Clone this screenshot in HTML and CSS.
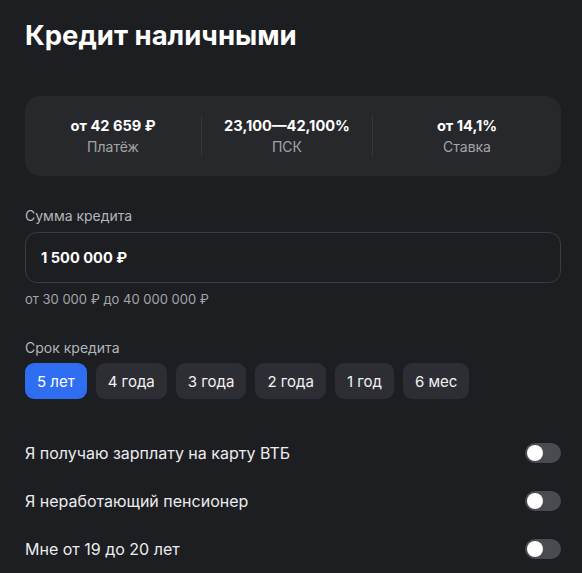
FILE: index.html
```html
<!DOCTYPE html>
<html lang="ru">
<head>
<meta charset="utf-8">
<title>Кредит наличными</title>
<link rel="stylesheet" href="styles.css">
</head>
<body>
<main class="page">
  <h1 class="title">Кредит наличными</h1>

  <section class="stats">
    <div class="stat">
      <div class="stat-value">от 42 659 ₽</div>
      <div class="stat-label">Платёж</div>
    </div>
    <div class="sep"></div>
    <div class="stat">
      <div class="stat-value">23,100—42,100%</div>
      <div class="stat-label">ПСК</div>
    </div>
    <div class="sep"></div>
    <div class="stat">
      <div class="stat-value">от 14,1%</div>
      <div class="stat-label">Ставка</div>
    </div>
  </section>

  <section class="field">
    <div class="field-label">Сумма кредита</div>
    <div class="input">1 500 000 ₽</div>
    <div class="hint">от 30 000 ₽ до 40 000 000 ₽</div>
  </section>

  <section class="term">
    <div class="field-label">Срок кредита</div>
    <div class="chips">
      <span class="chip chip-active">5 лет</span>
      <span class="chip">4 года</span>
      <span class="chip">3 года</span>
      <span class="chip">2 года</span>
      <span class="chip">1 год</span>
      <span class="chip">6 мес</span>
    </div>
  </section>

  <section class="options">
    <div class="option">
      <span class="option-text">Я получаю зарплату на карту ВТБ</span>
      <span class="toggle"><span class="knob"></span></span>
    </div>
    <div class="option">
      <span class="option-text">Я неработающий пенсионер</span>
      <span class="toggle"><span class="knob"></span></span>
    </div>
    <div class="option">
      <span class="option-text">Мне от 19 до 20 лет</span>
      <span class="toggle"><span class="knob"></span></span>
    </div>
  </section>
</main>
</body>
</html>
```

FILE: styles.css
```css
* { box-sizing: border-box; }

html, body {
  margin: 0;
  padding: 0;
  background: #1d1e22;
  color: #ffffff;
  font-family: Inter, "Noto Sans", "Liberation Sans", sans-serif;
}

.page {
  width: 582px;
  height: 573px;
  overflow: hidden;
  padding: 19px 21px 0 25px;
}

.title {
  margin: 0;
  font-size: 27.5px;
  line-height: 32px;
  font-weight: 700;
  color: #ffffff;
}

.stats {
  margin-top: 45px;
  height: 80px;
  background: #27282c;
  border-radius: 15px;
  display: grid;
  grid-template-columns: 176px 1px 170px 1px 1fr;
  align-items: center;
}

.stat {
  display: flex;
  flex-direction: column;
  align-items: center;
}

.stat-value {
  font-size: 14.6px;
  line-height: 20px;
  font-weight: 700;
  color: #ffffff;
}

.stat-label {
  margin-top: 2px;
  font-size: 14px;
  line-height: 18px;
  color: #a3a4a8;
}

.sep {
  width: 1px;
  height: 40px;
  background: #36373b;
}

.field {
  margin-top: 31px;
}

.field-label {
  font-size: 14px;
  line-height: 18px;
  color: #b4b5b9;
}

.input {
  margin-top: 7px;
  height: 51px;
  border: 1px solid #3b3c41;
  border-radius: 12px;
  display: flex;
  align-items: center;
  padding-left: 15px;
  font-size: 14.6px;
  font-weight: 700;
  color: #ffffff;
}

.hint {
  margin-top: 8px;
  font-size: 13px;
  line-height: 16px;
  color: #a3a4a8;
}

.term {
  margin-top: 32px;
}

.chips {
  margin-top: 6px;
  display: flex;
  gap: 9px;
}

.chip {
  height: 36px;
  padding: 0 12px;
  border-radius: 9px;
  background: #2d2e33;
  display: flex;
  align-items: center;
  font-size: 15px;
  color: #f2f2f4;
}

.chip-active {
  background: #2f6ef0;
  color: #ffffff;
}

.options {
  margin-top: 30px;
}

.option {
  height: 48px;
  display: flex;
  align-items: center;
  justify-content: space-between;
}

.option-text {
  font-size: 16px;
  color: #ececee;
}

.toggle {
  width: 36px;
  height: 20px;
  border-radius: 10px;
  background: #4a4b50;
  display: flex;
  align-items: center;
  padding-left: 2px;
}

.knob {
  width: 16px;
  height: 16px;
  border-radius: 50%;
  background: #ffffff;
}
```
